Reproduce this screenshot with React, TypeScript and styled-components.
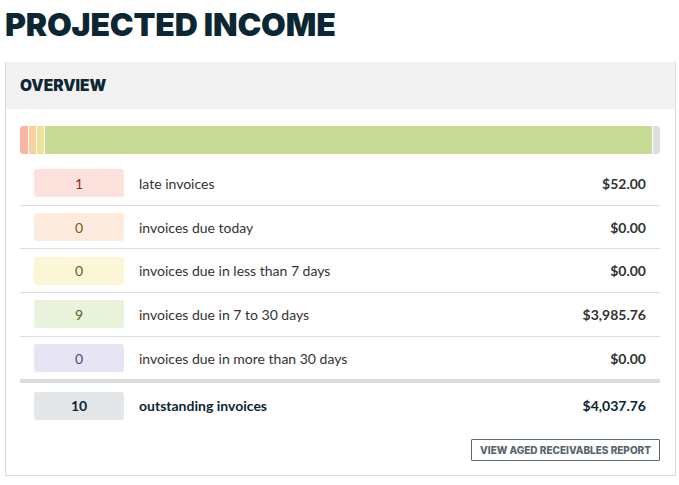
import styled, { createGlobalStyle } from "styled-components";

const GlobalStyle = createGlobalStyle`
    html, body {
        margin: 0;
        padding: 0;
        background: #ffffff;
    }
    body {
        font-family: Lato, "Liberation Sans", sans-serif;
    }
`;

type Tone = "late" | "today" | "week" | "month" | "later" | "total";

const tones: Record<Tone, { bar: string; bg: string; fg: string }> = {
    late: { bar: "#f8b5a1", bg: "#fde1dc", fg: "#9a2b1f" },
    today: { bar: "#fbd09f", bg: "#fdecdd", fg: "#87551b" },
    week: { bar: "#efe39b", bg: "#fbf6d8", fg: "#6a5e1a" },
    month: { bar: "#c6da96", bg: "#e9f2da", fg: "#4a6a19" },
    later: { bar: "#dedede", bg: "#e7e5f3", fg: "#4a4a7e" },
    total: { bar: "#dedede", bg: "#e4e7ea", fg: "#0b2633" },
};

const rows: { tone: Tone; count: number; label: string; amount: number }[] = [
    { tone: "late", count: 1, label: "late invoices", amount: 52 },
    { tone: "today", count: 0, label: "invoices due today", amount: 0 },
    { tone: "week", count: 0, label: "invoices due in less than 7 days", amount: 0 },
    { tone: "month", count: 9, label: "invoices due in 7 to 30 days", amount: 3985.76 },
    { tone: "later", count: 0, label: "invoices due in more than 30 days", amount: 0 },
];

const money = (n: number) =>
    "$" + n.toLocaleString("en-US", { minimumFractionDigits: 2, maximumFractionDigits: 2 });

export default function App() {
    const totalCount = rows.reduce((s, r) => s + r.count, 0);
    const totalAmount = rows.reduce((s, r) => s + r.amount, 0);

    return (
        <Page>
            <GlobalStyle />
            <Title>PROJECTED INCOME</Title>
            <Card>
                <CardHeader>OVERVIEW</CardHeader>
                <CardBody>
                    <Bar>
                        {rows.map((r) => (
                            <Segment key={r.tone} $tone={r.tone} style={{ flexGrow: r.amount }} />
                        ))}
                    </Bar>
                    <List>
                        {rows.map((r) => (
                            <Row key={r.tone}>
                                <Badge $tone={r.tone}>{r.count}</Badge>
                                <Label>{r.label}</Label>
                                <Amount>{money(r.amount)}</Amount>
                            </Row>
                        ))}
                        <TotalRow>
                            <Badge $tone="total">{totalCount}</Badge>
                            <Label $strong>outstanding invoices</Label>
                            <Amount $strong>{money(totalAmount)}</Amount>
                        </TotalRow>
                    </List>
                    <Footer>
                        <ReportButton>VIEW AGED RECEIVABLES REPORT</ReportButton>
                    </Footer>
                </CardBody>
            </Card>
        </Page>
    );
}

// style
const Page = styled.div`
    padding: 6px 3px 9px 5px;
`;

const Title = styled.h1`
    margin: 0 0 18px;
    font-family: Inter, "DejaVu Sans", sans-serif;
    font-weight: 900;
    font-size: 32px;
    line-height: 38px;
    color: #0b2733;
    letter-spacing: -0.2px;
`;

const Card = styled.section`
    border: 1px solid #dcdcdc;
    border-top: 0;
`;

const CardHeader = styled.h2`
    margin: 0;
    height: 47px;
    padding: 0 14px;
    display: flex;
    align-items: center;
    background: #f2f2f2;
    font-family: Inter, "DejaVu Sans", sans-serif;
    font-weight: 900;
    font-size: 15.5px;
    color: #0b2733;
`;

const CardBody = styled.div`
    padding: 17px 15px 14px 14px;
`;

const Bar = styled.div`
    display: flex;
    gap: 1px;
    height: 28px;
    border-radius: 3px;
    overflow: hidden;
`;

const Segment = styled.div<{ $tone: Tone }>`
    min-width: 7px;
    flex-basis: 0;
    background: ${(p) => tones[p.$tone].bar};
`;

const List = styled.div`
    margin-top: 8px;
`;

const Row = styled.div`
    display: flex;
    align-items: center;
    height: 42.7px;
    padding: 0 14px;
    border-bottom: 1px solid #dddddd;

    &:nth-child(5) {
        border-bottom: 4px solid #dcdcdc;
    }
`;

const TotalRow = styled(Row)`
    height: 45px;
    border-bottom: 0;
`;

const Badge = styled.div<{ $tone: Tone }>`
    width: 90px;
    height: 28px;
    border-radius: 3px;
    display: flex;
    align-items: center;
    justify-content: center;
    font-size: 14px;
    font-weight: ${(p) => (p.$tone === "total" ? 700 : 400)};
    background: ${(p) => tones[p.$tone].bg};
    color: ${(p) => tones[p.$tone].fg};
`;

const Label = styled.span<{ $strong?: boolean }>`
    flex: 1;
    margin-left: 15px;
    font-size: 14px;
    font-weight: ${(p) => (p.$strong ? 700 : 400)};
    color: ${(p) => (p.$strong ? "#0b2633" : "#333333")};
`;

const Amount = styled.span<{ $strong?: boolean }>`
    font-size: 14px;
    font-weight: 700;
    color: ${(p) => (p.$strong ? "#0b2633" : "#333333")};
`;

const Footer = styled.div`
    display: flex;
    justify-content: flex-end;
    margin-top: 11px;
`;

const ReportButton = styled.button`
    height: 22px;
    padding: 0 8px;
    background: #ffffff;
    border: 1px solid #5b6a72;
    border-radius: 1px;
    font-family: Inter, "DejaVu Sans", sans-serif;
    font-weight: 800;
    font-size: 10px;
    color: #56656d;
    cursor: pointer;
`;
